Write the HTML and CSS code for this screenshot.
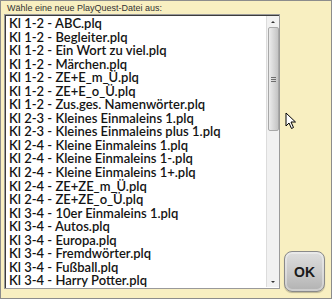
FILE: index.html
```html
<!DOCTYPE html>
<html lang="de">
<head>
  <meta charset="UTF-8">
  <title>PlayQuest-Datei</title>
  <link rel="stylesheet" href="styles.css">
</head>
<body>

<div class="dialog">
  <div class="chooser">
    <div class="caption">Wähle eine neue PlayQuest-Datei aus:</div>
    <div class="listbox">
      <ul class="files">
        <li>Kl 1-2 - ABC.plq</li>
        <li>Kl 1-2 - Begleiter.plq</li>
        <li>Kl 1-2 - Ein Wort zu viel.plq</li>
        <li>Kl 1-2 - Märchen.plq</li>
        <li>Kl 1-2 - ZE+E_m_Ü.plq</li>
        <li>Kl 1-2 - ZE+E_o_Ü.plq</li>
        <li>Kl 1-2 - Zus.ges. Namenwörter.plq</li>
        <li>Kl 2-3 - Kleines Einmaleins 1.plq</li>
        <li>Kl 2-3 - Kleines Einmaleins plus 1.plq</li>
        <li>Kl 2-4 - Kleine Einmaleins 1.plq</li>
        <li>Kl 2-4 - Kleine Einmaleins 1-.plq</li>
        <li>Kl 2-4 - Kleine Einmaleins 1+.plq</li>
        <li>Kl 2-4 - ZE+ZE_m_Ü.plq</li>
        <li>Kl 2-4 - ZE+ZE_o_Ü.plq</li>
        <li>Kl 3-4 - 10er Einmaleins 1.plq</li>
        <li>Kl 3-4 - Autos.plq</li>
        <li>Kl 3-4 - Europa.plq</li>
        <li>Kl 3-4 - Fremdwörter.plq</li>
        <li>Kl 3-4 - Fußball.plq</li>
        <li>Kl 3-4 - Harry Potter.plq</li>
      </ul>
      <div class="scrollbar">
        <div class="arrow up"></div>
        <div class="track">
          <div class="thumb"><span class="grip"></span></div>
        </div>
        <div class="arrow down"></div>
      </div>
    </div>
  </div>

  <div class="side">
    <button class="ok" type="button">OK</button>
  </div>

  <svg class="pointer" width="12" height="18" viewBox="0 0 12 18">
    <path d="M1 1 L1 14 L4 11 L6.5 16.5 L8.5 15.5 L6 10 L10.5 10 Z" fill="#fff" stroke="#000" stroke-width="1" stroke-linejoin="round"/>
  </svg>
</div>

</body>
</html>
```

FILE: styles.css
```css
html, body {
  margin: 0;
  padding: 0;
}

body {
  width: 332px;
  height: 299px;
  overflow: hidden;
}

.dialog {
  box-sizing: border-box;
  width: 332px;
  height: 299px;
  background: #f8efc1;
  border: 1px solid #8c8c8c;
  display: flex;
  padding: 2px 6px 9px 3px;
  gap: 4px;
  position: relative;
}

.chooser {
  display: flex;
  flex-direction: column;
  width: 276px;
}

.caption {
  font-family: "Liberation Sans", Arial, sans-serif;
  font-size: 9px;
  color: #333;
  line-height: 11px;
  padding-left: 3px;
}

.listbox {
  flex: 1;
  display: flex;
  background: #fff;
  border: 1px solid #9a9a9a;
  box-shadow: inset 1px 1px 0 #3c3c3c;
  overflow: hidden;
}

.files {
  flex: 1;
  list-style: none;
  margin: 0;
  padding: 2px 0 0 4px;
  font-family: "Lato", "Noto Sans", sans-serif;
  font-weight: 600;
  font-size: 13px;
  line-height: 13.55px;
  color: #141414;
  white-space: nowrap;
  overflow: hidden;
}

/* scrollbar */
.scrollbar {
  width: 12px;
  display: flex;
  flex-direction: column;
  background: #f1f1f1;
  border-left: 1px solid #dcdcdc;
  margin: 1px 0 1px 0;
}

.arrow {
  height: 11px;
  display: flex;
  justify-content: center;
  align-items: center;
}

.arrow::before {
  content: "";
  border-left: 2px solid transparent;
  border-right: 2px solid transparent;
}

.arrow.up::before {
  border-bottom: 2px solid #333;
}

.arrow.down::before {
  border-top: 2px solid #333;
}

.track {
  flex: 1;
}

.thumb {
  height: 104px;
  margin: 0 0 0 1px;
  box-sizing: border-box;
  border: 1px solid #a8a8a8;
  border-radius: 2px;
  background: linear-gradient(to right, #ececec, #d4d4d4 60%, #c4c4c4);
  display: flex;
  justify-content: center;
  align-items: center;
}

.grip {
  width: 5px;
  height: 5px;
  background: repeating-linear-gradient(to bottom, #6d6d6d 0 1px, transparent 1px 2px);
}

/* right side */
.side {
  flex: 1;
  display: flex;
  align-items: flex-end;
}

.ok {
  width: 41px;
  height: 41px;
  border: 1px solid #8a8a8a;
  border-radius: 8px;
  background: linear-gradient(to bottom, #dedede, #cacaca 50%, #b2b2b2);
  box-shadow: inset 0 0 0 2px rgba(255, 255, 255, 0.35), 0 1px 1px rgba(0, 0, 0, 0.25);
  font-family: "Liberation Sans", Arial, sans-serif;
  font-weight: bold;
  font-size: 14px;
  color: #1a1a1a;
  padding: 0;
  cursor: pointer;
  margin-bottom: -3px;
}

.pointer {
  position: absolute;
  left: 284px;
  top: 111px;
}
```
